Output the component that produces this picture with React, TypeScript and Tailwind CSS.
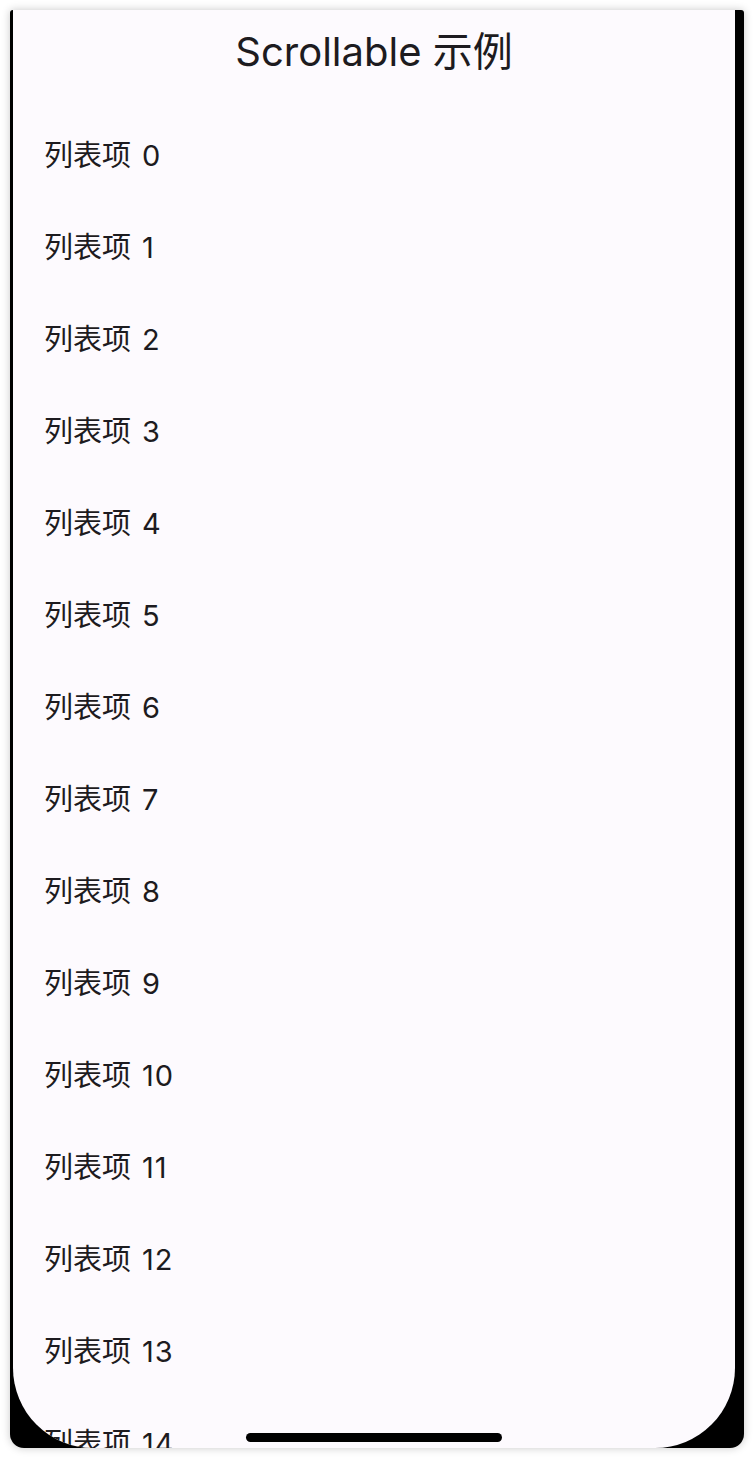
import React from 'react';

const items = Array.from({ length: 15 }, (_, i) => i);

export default function App() {
  return (
    <div className="w-[754px] h-[1458px] bg-white p-[10px]" style={{ fontFamily: 'Inter, "Noto Sans CJK SC", sans-serif' }}>
      {/* device frame */}
      <div className="relative h-full bg-black rounded-t-[3px] rounded-b-[14px] pl-[3px] pr-[9px] shadow-[0_0_8px_rgba(0,0,0,0.22)] overflow-hidden">
        {/* screen */}
        <div className="relative h-full bg-[#fdfafe] rounded-b-[80px] overflow-hidden">
          <div className="h-[99px] flex justify-center pt-[20px]">
            <h1 className="text-[40px] leading-[44px] text-[#1d1b20]">Scrollable 示例</h1>
          </div>
          <ul>
            {items.map((i) => (
              <li key={i} className="h-[92px] flex items-center pl-[31px] pt-[1px] text-[29px] text-[#1d1b20]">
                <span>列表项</span>
                <span className="ml-[11px] tracking-[1px]">{i}</span>
              </li>
            ))}
          </ul>
          {/* home indicator */}
          <div className="absolute bottom-[6px] left-[233px] w-[256px] h-[9px] rounded-full bg-black" />
        </div>
      </div>
    </div>
  );
}
